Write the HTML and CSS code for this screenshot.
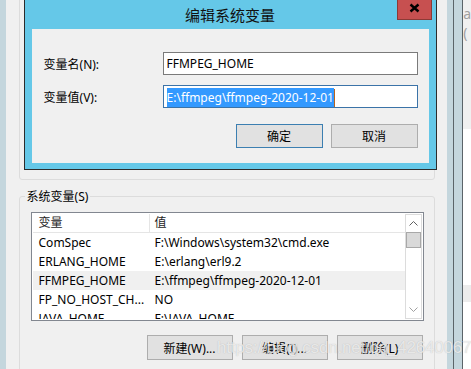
FILE: index.html
```html
<!DOCTYPE html>
<html lang="zh-CN">
<head>
    <meta charset="UTF-8">
    <title>编辑系统变量</title>
    <link rel="stylesheet" href="styles.css">
</head>
<body>
    <div class="desktop">
        <div class="frame-edge"></div>

        <div class="win">
            <div class="group group-top"></div>

            <div class="group group-vars">
                <div class="group-title">系统变量(S)</div>
                <div class="list">
                    <div class="list-body">
                        <div class="list-head">
                            <div class="cell cell-name">变量</div>
                            <div class="cell cell-value">值</div>
                        </div>
                        <div class="row">
                            <div class="cell cell-name">ComSpec</div>
                            <div class="cell cell-value">F:\Windows\system32\cmd.exe</div>
                        </div>
                        <div class="row">
                            <div class="cell cell-name">ERLANG_HOME</div>
                            <div class="cell cell-value">E:\erlang\erl9.2</div>
                        </div>
                        <div class="row row-hover">
                            <div class="cell cell-name">FFMPEG_HOME</div>
                            <div class="cell cell-value">E:\ffmpeg\ffmpeg-2020-12-01</div>
                        </div>
                        <div class="row">
                            <div class="cell cell-name">FP_NO_HOST_CH...</div>
                            <div class="cell cell-value">NO</div>
                        </div>
                        <div class="row">
                            <div class="cell cell-name">JAVA_HOME</div>
                            <div class="cell cell-value">F:\JAVA_HOME</div>
                        </div>
                    </div>
                    <div class="scrollbar">
                        <div class="scroll-btn">
                            <svg width="15" height="15" viewBox="0 0 15 15"><polyline points="3.5,9.5 7.5,5.5 11.5,9.5" fill="none" stroke="#606060" stroke-width="1"/></svg>
                        </div>
                        <div class="scroll-thumb"></div>
                        <div class="scroll-track"></div>
                        <div class="scroll-btn">
                            <svg width="15" height="15" viewBox="0 0 15 15"><polyline points="3.5,5.5 7.5,9.5 11.5,5.5" fill="none" stroke="#a0a0a0" stroke-width="1"/></svg>
                        </div>
                    </div>
                </div>
                <div class="actions">
                    <button class="btn">新建(W)...</button>
                    <button class="btn">编辑(I)...</button>
                    <button class="btn">删除(L)</button>
                </div>
            </div>

            <!-- the edit dialog sits on top of the environment window -->
            <div class="dialog">
                <div class="dialog-title">
                    编辑系统变量
                    <div class="close-btn">
                        <svg width="33" height="18" viewBox="0 0 33 18"><path d="M12.5 4.5 L20.5 11.5 M20.5 4.5 L12.5 11.5" stroke="#000" stroke-width="2.4" fill="none"/></svg>
                    </div>
                </div>
                <div class="dialog-body">
                    <div class="field">
                        <div class="field-label">变量名(N):</div>
                        <div class="textbox">FFMPEG_HOME</div>
                    </div>
                    <div class="field">
                        <div class="field-label">变量值(V):</div>
                        <div class="textbox textbox-focus"><span class="selected">E:\ffmpeg\ffmpeg-2020-12-01</span><span class="caret"></span></div>
                    </div>
                    <div class="dialog-actions">
                        <button class="btn btn-dialog btn-default">确定</button>
                        <button class="btn btn-dialog">取消</button>
                    </div>
                </div>
            </div>
        </div>

        <div class="frame-band"></div>
        <div class="frame-line"></div>
        <div class="frame-band frame-band-wide"></div>
        <div class="frame-line"></div>

        <div class="peek">
            <div class="peek-top">a<br>(</div>
            <div class="peek-white"></div>
            <div class="peek-gray"></div>
            <div class="peek-rest"></div>
        </div>

        <div class="watermark">https://blog.csdn.net/qq_42640067</div>
    </div>
</body>
</html>
```

FILE: styles.css
```css
body {
    margin: 0;
    background-color: #f0f0f0;
}
.desktop {
    position: relative;
    display: flex;
    width: 471px;
    height: 369px;
    overflow: hidden;
    background-color: #f0f0f0;
    font-family: "Noto Sans", "Noto Sans CJK SC", sans-serif;
    font-size: 12px;
    color: #000000;
}
.frame-edge {
    width: 6px;
    background-color: #c4d6dd;
}
.win {
    position: relative;
    width: 441px;
    flex-shrink: 0;
    background-color: #f0f0f0;
}
.group {
    border: 1px solid #dcdcdc;
    border-radius: 3px;
    box-sizing: border-box;
}
.group-top {
    margin: -10px 12px 0 13px;
    height: 190px;
}
.group-vars {
    margin: 16px 12px 0 13px;
    padding: 0 10px 20px 11px;
}
.group-title {
    width: max-content;
    margin: -9px 0 0 -6px;
    padding: 0 2px;
    line-height: 17px;
    background-color: #f0f0f0;
}

/* variable list */
.list {
    display: flex;
    height: 109px;
    margin-top: 7px;
    padding: 1px;
    border: 1px solid #828790;
    box-sizing: border-box;
    background-color: #ffffff;
}
.list-body {
    flex: 1;
    overflow: hidden;
}
.list-head {
    display: flex;
    height: 18px;
    line-height: 18px;
    border-bottom: 1px solid #e5e5e5;
    color: #1e1e1e;
}
.list-head .cell-name {
    width: 110px;
    border-right: 1px solid #e5e5e5;
}
.row {
    display: flex;
    height: 19px;
    line-height: 19px;
}
.row-hover {
    background-color: #f0f0f0;
}
.cell {
    white-space: nowrap;
}
.cell-name {
    width: 111px;
    padding-left: 6px;
}
.cell-value {
    padding-left: 5px;
}
.scrollbar {
    display: flex;
    flex-direction: column;
    width: 17px;
    border: 1px solid #dcdcdc;
    box-sizing: border-box;
    background-color: #ffffff;
}
.scroll-btn {
    height: 17px;
    display: flex;
    align-items: center;
    justify-content: center;
}
.scroll-thumb {
    height: 16px;
    border: 1px solid #a8a8a8;
    background-color: #d9d9d9;
    box-sizing: border-box;
}
.scroll-track {
    flex: 1;
}
.actions {
    display: flex;
    justify-content: flex-end;
    gap: 9px;
    margin-top: 14px;
    padding-right: 1px;
}
.btn {
    width: 86px;
    height: 25px;
    padding: 0;
    border: 1px solid #adadad;
    background-color: #e1e1e1;
    font-family: "Noto Sans", "Noto Sans CJK SC", sans-serif;
    font-size: 12px;
    color: #000000;
}

/* edit dialog */
.dialog {
    position: absolute;
    left: 18px;
    top: -1px;
    width: 413px;
    height: 171px;
    display: flex;
    flex-direction: column;
    padding: 0 7px 6px;
    border: 1px solid #2c2c2c;
    box-sizing: border-box;
    background-color: #65c8e8;
}
.dialog-title {
    height: 29px;
    line-height: 29px;
    text-align: center;
    font-family: "Noto Sans CJK SC", sans-serif;
    font-size: 15px;
    color: #111111;
}
.close-btn {
    position: absolute;
    top: 0;
    right: 4px;
    width: 35px;
    height: 20px;
    border: 1px solid #8c3a36;
    border-top: none;
    box-sizing: border-box;
    background-color: #c75050;
    line-height: 0;
}
.dialog-body {
    flex: 1;
    padding: 23px 11px 0 12px;
    background-color: #f0f0f0;
}
.field {
    display: flex;
    align-items: center;
    height: 23px;
}
.field + .field {
    margin-top: 10px;
}
.field-label {
    width: 119px;
}
.textbox {
    flex: 1;
    height: 23px;
    padding-left: 3px;
    line-height: 21px;
    border: 1px solid #7a7a7a;
    box-sizing: border-box;
    background-color: #ffffff;
    white-space: nowrap;
}
.textbox-focus {
    border-color: #3b73a8;
}
.selected {
    display: inline-block;
    line-height: 19px;
    background-color: #3399ff;
    color: #ffffff;
    vertical-align: middle;
}
.caret {
    display: inline-block;
    width: 1px;
    height: 18px;
    background-color: #b8641e;
    vertical-align: middle;
}
.dialog-actions {
    display: flex;
    justify-content: flex-end;
    gap: 8px;
    margin-top: 16px;
}
.btn-dialog {
    width: 87px;
    height: 24px;
}
.btn-default {
    border-color: #3c7fb1;
}

/* windows further right */
.frame-band {
    width: 7px;
    background-color: #c4d6dd;
}
.frame-band-wide {
    width: 9px;
}
.frame-line {
    width: 1px;
    background-color: #5b6469;
}
.peek {
    flex: 1;
    display: flex;
    flex-direction: column;
}
.peek-top {
    height: 129px;
    padding-top: 4px;
    box-sizing: border-box;
    background-color: #f0f0f0;
    font-size: 14px;
    line-height: 19px;
    color: #a0a0a0;
}
.peek-white {
    height: 156px;
    background-color: #ffffff;
}
.peek-gray {
    height: 17px;
    background-color: #ececec;
}
.peek-rest {
    flex: 1;
    background-color: #ffffff;
}
.watermark {
    position: absolute;
    left: 217px;
    top: 337px;
    font-family: "Liberation Sans", sans-serif;
    font-size: 17px;
    letter-spacing: -0.2px;
    line-height: 22px;
    color: rgba(245, 245, 245, 0.8);
    text-shadow: 0 0 1px rgba(90, 90, 90, 0.35);
    white-space: nowrap;
}
```
